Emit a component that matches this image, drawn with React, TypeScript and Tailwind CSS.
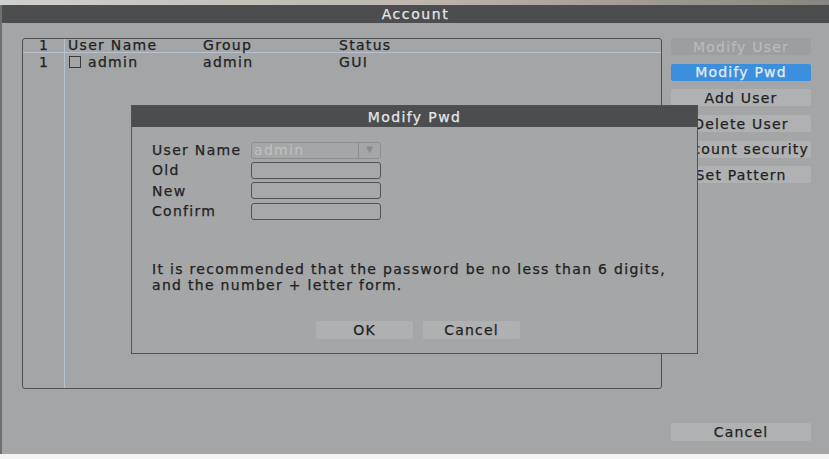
import React from "react";

const font = { fontFamily: '"DejaVu Sans", Verdana, sans-serif' };

function SideBtn({ label, kind }: { label: string; kind?: "disabled" | "active" }) {
  const cls =
    kind === "disabled"
      ? "bg-[#9c9e9f] text-[#b9babb]"
      : kind === "active"
      ? "bg-[#3b8fdc] text-[#e4ecf4]"
      : "bg-[#afb1b2] text-[#1f1f1f]";
  return (
    <div className={`h-[17px] w-[140px] rounded-[2px] flex items-center justify-center overflow-hidden whitespace-nowrap text-[14px] tracking-[1.2px] leading-none ${cls}`}>
      {label}
    </div>
  );
}

function Field({ label, children }: { label: string; children: React.ReactNode }) {
  return (
    <div className="flex items-center h-[20.3px]">
      <div className="w-[99px] text-[14px] tracking-[1.3px] leading-none text-[#232323]">{label}</div>
      {children}
    </div>
  );
}

function Input() {
  return <div className="w-[130px] h-[17px] rounded-[3px] border border-[#505254] bg-[#a6a8a9]" />;
}

export default function App() {
  return (
    <div className="relative w-[829px] h-[459px] overflow-hidden bg-[#f4f4f4] [-webkit-text-stroke:0.25px]" style={font}>
      <div className="h-[5px] bg-gradient-to-r from-[#cfcfcf] via-[#bdb7ad] to-[#8a8580]" />
      <div className="h-[449px] bg-[#a3a5a6] border-l-2 border-[#6d6f70] flex flex-col">
        <div className="h-[18px] bg-[#4b4d4f] flex items-center justify-center text-[14px] tracking-[1.6px] text-[#e6e6e6] leading-none">
          Account
        </div>
        <div className="flex pl-[20px] pt-[15px]">
          <div className="w-[640px] h-[351px] rounded-[3px] border border-[#4e5052] flex">
            <div className="w-[42px] border-r border-[#b4c3cf] flex flex-col text-[14px] text-[#222] leading-none">
              <div className="h-[14px] flex items-end justify-center border-b border-[#b4c3cf]">1</div>
              <div className="h-[17px] flex items-center justify-center">1</div>
            </div>
            <div className="flex-1 flex flex-col text-[14px] tracking-[1.3px] text-[#222] leading-none">
              <div className="h-[14px] flex items-end border-b border-[#b4c3cf] pl-[3px]">
                <div className="w-[135px]">User Name</div>
                <div className="w-[136px]">Group</div>
                <div>Status</div>
              </div>
              <div className="h-[17px] flex items-center pl-[4px]">
                <div className="w-[134px] flex items-center">
                  <div className="w-[12px] h-[12px] border border-[#3a3a3a] mr-[7px]" />
                  admin
                </div>
                <div className="w-[136px]">admin</div>
                <div>GUI</div>
              </div>
            </div>
          </div>
          <div className="ml-[9px] flex flex-col gap-[8.7px]">
            <SideBtn label="Modify User" kind="disabled" />
            <SideBtn label="Modify Pwd" kind="active" />
            <SideBtn label="Add User" />
            <SideBtn label="Delete User" />
            <SideBtn label="Account security" />
            <SideBtn label="Set Pattern" />
          </div>
        </div>
        <div className="flex justify-end pr-[18px] pt-[34px]">
          <div className="h-[18px] w-[140px] rounded-[2px] flex items-center justify-center text-[14px] tracking-[1.2px] leading-none bg-[#afb1b2] text-[#1f1f1f]">
            Cancel
          </div>
        </div>
      </div>

      <div className="absolute left-[131px] top-[105px] w-[567px] h-[249px] bg-[#a4a6a7] border border-[#505254] flex flex-col">
        <div className="h-[21px] bg-[#4b4d4f] flex items-center justify-center text-[14px] tracking-[1.4px] text-[#e6e6e6] leading-none">
          Modify Pwd
        </div>
        <div className="pl-[20px] pt-[13px] flex flex-col">
          <Field label="User Name">
            <div className="w-[130px] h-[17px] rounded-[3px] border border-[#8c8e8f] flex items-center">
              <div className="flex-1 pl-[2px] text-[14px] tracking-[1.3px] leading-none text-[#bfc0c1] [-webkit-text-stroke:0px]">admin</div>
              <div className="w-[22px] h-full border-l border-[#8c8e8f] flex items-center justify-center text-[8px] text-[#888a8b]">▼</div>
            </div>
          </Field>
          <Field label="Old"><Input /></Field>
          <Field label="New"><Input /></Field>
          <Field label="Confirm"><Input /></Field>
          <div className="mt-[40px] text-[14px] tracking-[1.3px] leading-[16px] text-[#222]">
            <div>It is recommended that the password be no less than 6 digits,</div>
            <div>and the number + letter form.</div>
          </div>
        </div>
        <div className="flex justify-center gap-[10px] mt-[28px] pl-[7px]">
          <div className="w-[97px] h-[18px] rounded-[2px] bg-[#aeb0b1] flex items-center justify-center text-[14px] tracking-[1.2px] leading-none text-[#1f1f1f]">OK</div>
          <div className="w-[97px] h-[18px] rounded-[2px] bg-[#aeb0b1] flex items-center justify-center text-[14px] tracking-[1.2px] leading-none text-[#1f1f1f]">Cancel</div>
        </div>
      </div>
    </div>
  );
}
